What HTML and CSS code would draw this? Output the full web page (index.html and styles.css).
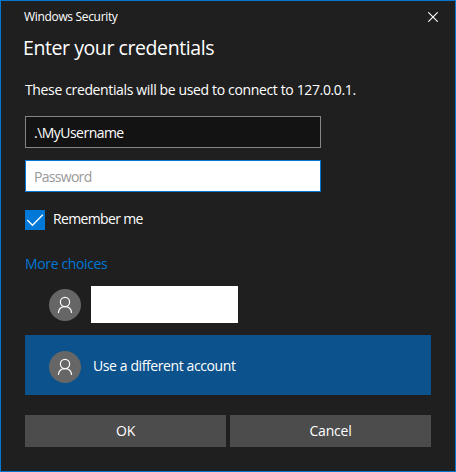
FILE: index.html
```html
<!DOCTYPE html>
<html lang="en">
<head>
<meta charset="utf-8">
<title>Windows Security</title>
<link rel="stylesheet" href="styles.css">
</head>
<body>
<main class="dialog">
  <header class="titlebar">
    <span class="caption">Windows Security</span>
    <button class="close" type="button" aria-label="Close">
      <svg width="10" height="10" viewBox="0 0 10 10"><path d="M.3 .3 9.7 9.7M9.7 .3 .3 9.7"/></svg>
    </button>
  </header>
  <h1 class="heading">Enter your credentials</h1>
  <p class="message">These credentials will be used to connect to 127.0.0.1.</p>
  <form class="form">
    <div class="field"><span class="t-user">.\MyUsername</span></div>
    <div class="field field-focus"><span class="t-pass">Password</span></div>
    <div class="remember">
      <span class="check"><svg width="20" height="20" viewBox="0 0 20 20"><path d="M2.3 10 7.5 15.3 17.8 4.8"/></svg></span>
      <span class="t-remember">Remember me</span>
    </div>
    <div class="more">More choices</div>
    <div class="account">
      <span class="avatar"><svg width="32" height="32" viewBox="0 0 32 32"><circle cx="16" cy="13" r="4.6"/><path d="M9.4 24c.3-3.9 3-6.4 6.6-6.4s6.3 2.5 6.6 6.4"/></svg></span>
      <span class="blank"></span>
    </div>
    <div class="account account-selected">
      <span class="avatar"><svg width="32" height="32" viewBox="0 0 32 32"><circle cx="16" cy="13" r="4.6"/><path d="M9.4 24c.3-3.9 3-6.4 6.6-6.4s6.3 2.5 6.6 6.4"/></svg></span>
      <span class="t-account">Use a different account</span>
    </div>
    <div class="actions">
      <button class="btn" type="button">OK</button>
      <button class="btn" type="button">Cancel</button>
    </div>
  </form>
</main>
</body>
</html>
```
FILE: styles.css
```css
* { box-sizing: border-box; }
body { margin: 0; background: #1f1f1f; }
.dialog {
  width: 456px;
  height: 472px;
  border: 1px solid #0078d7;
  background: #1f1f1f;
  color: #fff;
  font: 14px/20px "Open Sans", "Noto Sans", sans-serif;
  letter-spacing: -.36px;
  white-space: nowrap;
  overflow: hidden;
}
svg { display: block; fill: none; stroke: #fff; }
.titlebar {
  display: flex;
  align-items: center;
  justify-content: space-between;
  height: 31px;
  padding: 0 17px 0 23px;
}
.caption { font-size: 12px; letter-spacing: -.33px; }
.close { padding: 0; border: 0; background: none; }
.close svg { stroke-width: 1.1; }
.heading {
  margin: 0;
  padding-left: 22px;
  height: 32px;
  font-size: 19.5px;
  line-height: 32px;
  font-weight: 400;
  letter-spacing: -.42px;
}
.message { margin: 16px 0 0 24px; height: 20px; }
.form { width: 406px; margin: 16px 0 0 24px; }
.field {
  display: flex;
  align-items: center;
  width: 296px;
  height: 32px;
  margin-bottom: 12px;
  padding: 2px 0 0 8px;
  border: 1px solid #858585;
  background: #131313;
}
.field-focus { border-color: #0078d7; background: #fff; color: #999; }
.t-user { letter-spacing: -.53px; }
.t-pass { letter-spacing: -.7px; }
.remember { display: flex; align-items: center; gap: 8px; height: 20px; margin-top: 18px; }
.check { width: 20px; height: 20px; background: #0078d7; }
.check svg { stroke-width: 1.3; }
.t-remember { margin-top: -2px; letter-spacing: -.65px; }
.more { height: 20px; margin: 24px 0 12px; color: #0078d7; }
.account { display: flex; align-items: center; height: 37px; padding-left: 24px; }
.avatar { width: 32px; height: 32px; border-radius: 50%; background: #666; }
.avatar svg { stroke-width: 1.2; }
.blank { width: 147px; height: 37px; margin-left: 10px; background: #fff; }
.account-selected { height: 60px; margin-top: 12px; background: #0c538d; }
.account-selected .avatar { margin-top: 4px; }
.t-account { margin: 2px 0 0 12px; letter-spacing: -.4px; }
.actions { display: grid; grid-template-columns: 1fr 1fr; gap: 4px; margin-top: 20px; }
.btn { height: 32px; padding: 0; border: 0; background: #4c4c4c; color: #fff; font: inherit; letter-spacing: -.2px; }
```
